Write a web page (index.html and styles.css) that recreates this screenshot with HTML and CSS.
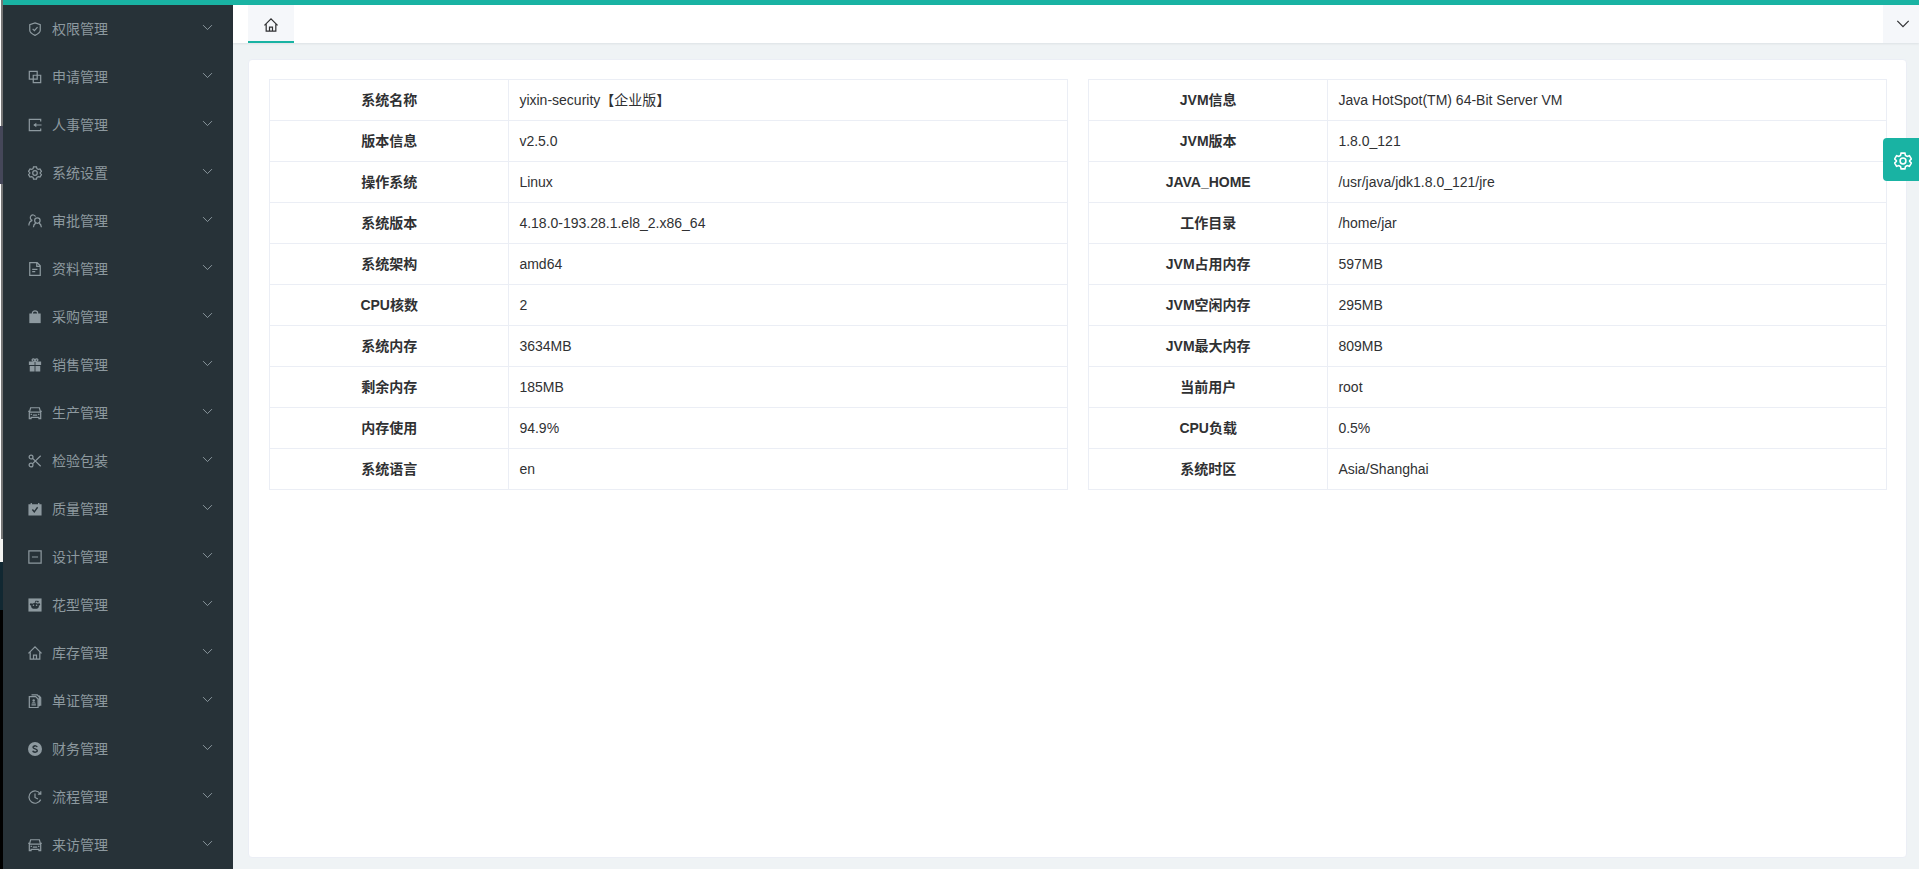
FILE: index.html
```
<!DOCTYPE html>
<html lang="zh-CN">
<head>
<meta charset="utf-8">
<meta name="viewport" content="width=device-width, initial-scale=1">
<title>yixin-security</title>
<link rel="stylesheet" href="styles.css">
</head>
<body>
<svg class="sprite" aria-hidden="true">
  <symbol id="i-down" viewBox="0 0 16 16"><path d="M1.500 4.500 8 11l6.500-6.500"/></symbol>
  <symbol id="i-shield" viewBox="0 0 16 16"><path d="M8 1 14 3v6.500c0 2.500-3 4.500-6 5.800-3-1.300-6-3.300-6-5.800V3zM5.300 7.800l2 2 3.600-4"/></symbol>
  <symbol id="i-copy" viewBox="0 0 16 16"><path d="M1.500 1.500h9v9h-9zM6 6h8.500v8.500H6z"/></symbol>
  <symbol id="i-login" viewBox="0 0 16 16"><path d="M14.500 4V1.500h-13v13h13V12M15.500 8H7"/><path class="solid" d="M6 8 9.500 5.500v5z"/></symbol>
  <symbol id="i-gear" viewBox="0 0 16 16"><path d="M6.300 1h3.400l.5 2 1.500.9 2-.6 1.700 2.900-1.500 1.400v.8l1.500 1.400-1.700 2.900-2-.6-1.500.9-.5 2H6.300l-.5-2-1.500-.9-2 .6L.6 9.800l1.500-1.400v-.8L.6 6.200l1.700-2.900 2 .6L5.800 3z"/><circle cx="8" cy="8" r="2.600"/></symbol>
  <symbol id="i-users" viewBox="0 0 16 16"><path d="M5 7.200A3.100 3.100 0 1 1 8.600 3M1 13c0-3 1.400-5 4-5.800M6.200 15.200c.1-2.700 1.200-4 2.700-4.800M15.300 15.200c-.2-2.700-1.300-4-2.700-4.800"/><circle cx="10.700" cy="7.500" r="3.100"/></symbol>
  <symbol id="i-doc" viewBox="0 0 16 16"><path d="M2 .8h8.500L14 4.300v11H2zM10 1v4h4M4.800 8.500h6M4.800 11h3.500"/></symbol>
  <symbol id="i-bag" viewBox="0 0 16 16"><path class="solid" d="M1.500 4h13v11h-13z"/><path d="M5 5V3.500C5 .2 11 .2 11 3.500V5"/></symbol>
  <symbol id="i-gift" viewBox="0 0 16 16"><path class="solid" d="M1 4h6.500v4H1zM8.500 4H15v4H8.500zM2 9h5.500v6.500H2zM8.500 9H14v6.500H8.500z"/><path d="M8 4C4 4 4 1 6 1s2 3 2 3 0-3 2-3 2 3-2 3"/></symbol>
  <symbol id="i-car" viewBox="0 0 16 16"><path d="M1.500 7.500 3 2h10l1.500 5.500v7h-2V13h-9v1.500h-2zM0 6h2M14 6h2M2 7h12M5.500 10.500h5M3 9.500h1.500M11.500 9.500H13"/></symbol>
  <symbol id="i-cut" viewBox="0 0 16 16"><circle cx="3.500" cy="3.500" r="2.200"/><circle cx="3.500" cy="12.500" r="2.200"/><path d="M5.300 5 14.500 14M5.300 11 14.500 2"/></symbol>
  <symbol id="i-check" viewBox="0 0 16 16"><path class="solid" d="M.5 2.500H3V1h1.500v1.500h7V1H13v1.500h2.500v13H.5z"/><path class="cut" d="m5 8.500 2.200 2.700L11 6"/></symbol>
  <symbol id="i-minus" viewBox="0 0 16 16"><path d="M1 1h14v14H1zM4.500 8h7"/></symbol>
  <symbol id="i-face" viewBox="0 0 16 16"><path class="solid" d="M.5.500h15v15H.5z"/><ellipse class="hole" cx="8" cy="9" rx="4.500" ry="3.300"/><circle class="hole" cx="3.400" cy="7.300" r="1.300"/><circle class="hole" cx="12.600" cy="7.300" r="1.300"/><circle class="hole" cx="11.300" cy="4" r="1"/><path class="cut thin" d="m8 6 .8-2.500 2.500.500"/><circle class="solid" cx="6.200" cy="8.300" r=".9"/><circle class="solid" cx="9.800" cy="8.300" r=".9"/></symbol>
  <symbol id="i-home" viewBox="0 0 16 16"><path d="M.5 8.500 8 1l7.500 7.500M2.500 7v8h11V7M6.300 15v-4.500h3.400V15"/></symbol>
  <symbol id="i-cards" viewBox="0 0 16 16"><path d="M1.500 3h7.300l2.700 2.700v9.800h-10zM4 1h6.500L13 3.500v10.500M12.500 2l2 2.300v9M4 12.500h5"/><circle class="solid" cx="6.500" cy="7.500" r="1.400"/><path class="solid" d="M4 10.800c.4-2 4.600-2 5 0z"/></symbol>
  <symbol id="i-money" viewBox="0 0 16 16"><circle class="solid" cx="8" cy="8" r="8"/><path class="cut" d="M10.500 5.800C10 4 5.700 4 5.700 6.100c0 2.300 4.900 1.300 4.900 3.700 0 2.300-4.700 2.300-5.200.2M8 3.500v1.200M8 11.300v1.200"/></symbol>
  <symbol id="i-clock" viewBox="0 0 16 16"><path d="M14 4.300A7 7 0 1 0 14.500 11M14.600 1.500v3.300h-3.300M8 4v4.500l3.300 1.700"/></symbol>
</svg>

<div class="app">
  <div class="edge" aria-hidden="true"><i class="edge-a"></i><i class="edge-b"></i><i class="edge-c"></i><i class="edge-d"></i><i class="edge-e"></i><i class="edge-f"></i></div>
  <div class="shell">
    <div class="topline"></div>
    <nav class="sidebar" aria-label="主菜单">
      <ul class="menu">
        <li><a class="item" href="#"><svg class="icon"><use href="#i-shield"/></svg><span>权限管理</span><svg class="arrow"><use href="#i-down"/></svg></a></li>
        <li><a class="item" href="#"><svg class="icon"><use href="#i-copy"/></svg><span>申请管理</span><svg class="arrow"><use href="#i-down"/></svg></a></li>
        <li><a class="item" href="#"><svg class="icon"><use href="#i-login"/></svg><span>人事管理</span><svg class="arrow"><use href="#i-down"/></svg></a></li>
        <li><a class="item" href="#"><svg class="icon"><use href="#i-gear"/></svg><span>系统设置</span><svg class="arrow"><use href="#i-down"/></svg></a></li>
        <li><a class="item" href="#"><svg class="icon"><use href="#i-users"/></svg><span>审批管理</span><svg class="arrow"><use href="#i-down"/></svg></a></li>
        <li><a class="item" href="#"><svg class="icon"><use href="#i-doc"/></svg><span>资料管理</span><svg class="arrow"><use href="#i-down"/></svg></a></li>
        <li><a class="item" href="#"><svg class="icon"><use href="#i-bag"/></svg><span>采购管理</span><svg class="arrow"><use href="#i-down"/></svg></a></li>
        <li><a class="item" href="#"><svg class="icon"><use href="#i-gift"/></svg><span>销售管理</span><svg class="arrow"><use href="#i-down"/></svg></a></li>
        <li><a class="item" href="#"><svg class="icon"><use href="#i-car"/></svg><span>生产管理</span><svg class="arrow"><use href="#i-down"/></svg></a></li>
        <li><a class="item" href="#"><svg class="icon"><use href="#i-cut"/></svg><span>检验包装</span><svg class="arrow"><use href="#i-down"/></svg></a></li>
        <li><a class="item" href="#"><svg class="icon"><use href="#i-check"/></svg><span>质量管理</span><svg class="arrow"><use href="#i-down"/></svg></a></li>
        <li><a class="item" href="#"><svg class="icon"><use href="#i-minus"/></svg><span>设计管理</span><svg class="arrow"><use href="#i-down"/></svg></a></li>
        <li><a class="item" href="#"><svg class="icon"><use href="#i-face"/></svg><span>花型管理</span><svg class="arrow"><use href="#i-down"/></svg></a></li>
        <li><a class="item" href="#"><svg class="icon"><use href="#i-home"/></svg><span>库存管理</span><svg class="arrow"><use href="#i-down"/></svg></a></li>
        <li><a class="item" href="#"><svg class="icon"><use href="#i-cards"/></svg><span>单证管理</span><svg class="arrow"><use href="#i-down"/></svg></a></li>
        <li><a class="item" href="#"><svg class="icon"><use href="#i-money"/></svg><span>财务管理</span><svg class="arrow"><use href="#i-down"/></svg></a></li>
        <li><a class="item" href="#"><svg class="icon"><use href="#i-clock"/></svg><span>流程管理</span><svg class="arrow"><use href="#i-down"/></svg></a></li>
        <li><a class="item" href="#"><svg class="icon"><use href="#i-car"/></svg><span>来访管理</span><svg class="arrow"><use href="#i-down"/></svg></a></li>
      </ul>
    </nav>
    <div class="main">
      <header class="tabs">
        <button class="tab" type="button" aria-label="首页"><svg class="icon"><use href="#i-home"/></svg></button>
        <button class="more" type="button" aria-label="标签操作"><svg class="icon"><use href="#i-down"/></svg></button>
      </header>
      <main class="card">
        <table class="info">
          <tbody>
            <tr><th scope="row">系统名称</th><td>yixin-security【企业版】</td></tr>
            <tr><th scope="row">版本信息</th><td>v2.5.0</td></tr>
            <tr><th scope="row">操作系统</th><td>Linux</td></tr>
            <tr><th scope="row">系统版本</th><td>4.18.0-193.28.1.el8_2.x86_64</td></tr>
            <tr><th scope="row">系统架构</th><td>amd64</td></tr>
            <tr><th scope="row">CPU核数</th><td>2</td></tr>
            <tr><th scope="row">系统内存</th><td>3634MB</td></tr>
            <tr><th scope="row">剩余内存</th><td>185MB</td></tr>
            <tr><th scope="row">内存使用</th><td>94.9%</td></tr>
            <tr><th scope="row">系统语言</th><td>en</td></tr>
          </tbody>
        </table>
        <table class="info">
          <tbody>
            <tr><th scope="row">JVM信息</th><td>Java HotSpot(TM) 64-Bit Server VM</td></tr>
            <tr><th scope="row">JVM版本</th><td>1.8.0_121</td></tr>
            <tr><th scope="row">JAVA_HOME</th><td>/usr/java/jdk1.8.0_121/jre</td></tr>
            <tr><th scope="row">工作目录</th><td>/home/jar</td></tr>
            <tr><th scope="row">JVM占用内存</th><td>597MB</td></tr>
            <tr><th scope="row">JVM空闲内存</th><td>295MB</td></tr>
            <tr><th scope="row">JVM最大内存</th><td>809MB</td></tr>
            <tr><th scope="row">当前用户</th><td>root</td></tr>
            <tr><th scope="row">CPU负载</th><td>0.5%</td></tr>
            <tr><th scope="row">系统时区</th><td>Asia/Shanghai</td></tr>
          </tbody>
        </table>
      </main>
    </div>
  </div>
</div>
<button class="settings" type="button" aria-label="主题设置"><svg class="icon"><use href="#i-gear"/></svg></button>
</body>
</html>
```
FILE: styles.css
```
* { box-sizing: border-box; }
body {
  margin: 0;
  background: #eff3f5;
  color: #303133;
  font: 14px/20px "Liberation Sans", Arial, "Noto Sans CJK SC", sans-serif;
  overflow: hidden;
}
button { border: 0; padding: 0; cursor: pointer; color: inherit; }
svg { fill: none; stroke: currentColor; stroke-width: 1.4; flex: none; }
.sprite { position: absolute; width: 0; height: 0; }
.solid { fill: currentColor; stroke: none; }
.cut { stroke: #273238; stroke-width: 1.6; }
.thin { stroke-width: 1; }
.hole { fill: #273238; stroke: none; }

.app { display: grid; grid-template-columns: 3px 1fr; height: 100vh; }

/* Strip of the desktop behind the window */
.edge { display: flex; flex-direction: column; }
.edge-a { flex: 126; background: #fff; border-right: 2px solid #777; }
.edge-b { flex: 58; background: #454759; }
.edge-c { flex: 355; background: #fff; border-right: 2px solid #777; }
.edge-d { flex: 23; background: #f2f2f0; }
.edge-e { flex: 48; background: #112832; }
.edge-f { flex: 259; background: #000; }

.shell {
  display: grid;
  grid-template-columns: 230px 1fr;
  grid-template-rows: 5px 1fr;
  min-height: 0;
}
.topline { grid-column: 1 / -1; background: #19b3a3; }

.sidebar { background: #273238; min-height: 0; overflow: hidden; }
.menu { list-style: none; margin: 0; padding: 0; }
.item {
  display: flex;
  align-items: center;
  gap: 10px;
  height: 48px;
  padding: 0 20px 0 25px;
  color: #8d999f;
  text-decoration: none;
}
.item .icon { width: 14px; height: 14px; }
.item .arrow { width: 11px; height: 11px; margin: 0 0 3px auto; }

.main { display: flex; flex-direction: column; min-width: 0; }
.tabs {
  display: flex;
  justify-content: space-between;
  height: 38px;
  padding-left: 15px;
  background: #fff;
  box-shadow: 0 1px 2px rgba(0, 21, 41, .08);
}
.tab { width: 46px; padding-top: 4px; background: #f5f7fa; border-bottom: 2px solid #19b3a3; display: grid; place-items: center; }
.tab .icon { width: 14px; height: 14px; }
.more { width: 36px; background: #f5f7fa; display: grid; place-items: center; padding-left: 4px; }
.more .icon { width: 14px; height: 14px; }

.card {
  flex: 1;
  display: grid;
  grid-template-columns: 1fr 1fr;
  align-items: start;
  gap: 20px;
  margin: 16px 12px 11px 15px;
  padding: 19px 19px 20px 20px;
  background: #fff;
  border: 1px solid #ebeef5;
  border-radius: 4px;
}
.info { width: 100%; table-layout: fixed; border-collapse: collapse; }
.info th, .info td { border: 1px solid #ebeef5; padding: 10px; }
.info th { width: 30%; }

.settings {
  position: fixed;
  right: 0;
  top: 138px;
  width: 36px;
  height: 43px;
  padding: 2px 0 0 4px;
  display: grid;
  place-items: center;
  background: #19b3a3;
  color: #fff;
  border-radius: 4px 0 0 4px;
}
.settings .icon { width: 18px; height: 18px; }
```
